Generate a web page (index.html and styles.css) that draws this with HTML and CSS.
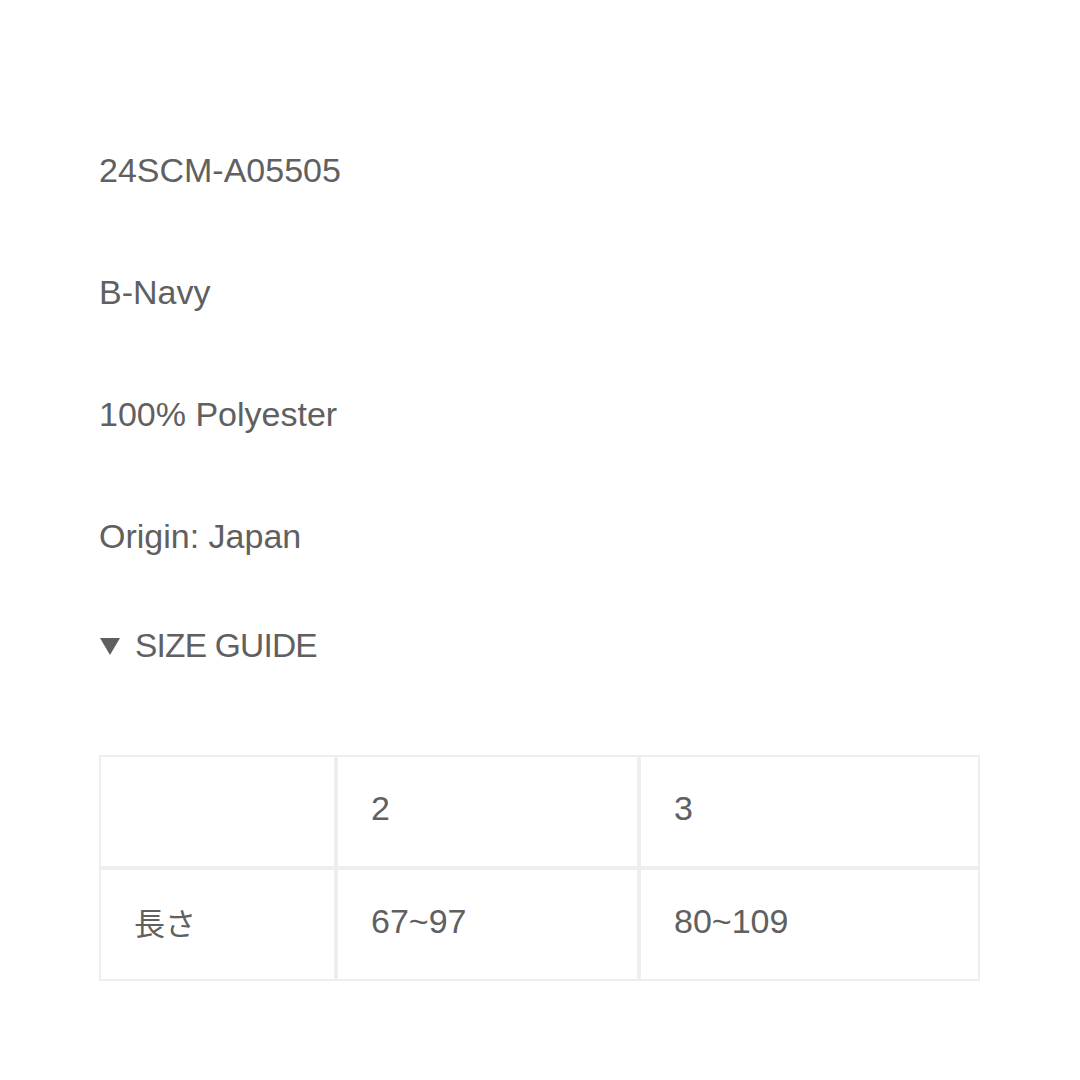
FILE: index.html
```html
<!DOCTYPE html>
<html lang="ja">
<head>
<meta charset="utf-8">
<link rel="stylesheet" href="styles.css">
</head>
<body>
<main class="page">
  <p class="line">24SCM-A05505</p>
  <p class="line">B-Navy</p>
  <p class="line">100% Polyester</p>
  <p class="line">Origin: Japan</p>
  <div class="guide">
    <svg class="tri" width="20" height="18" viewBox="0 0 20 18"><polygon points="0,1 20,1 10,18" fill="#5f5f5f"/></svg>
    <span>SIZE GUIDE</span>
  </div>
  <table class="sizes">
    <colgroup><col class="c1"><col class="c2"><col class="c3"></colgroup>
    <tr><td></td><td>2</td><td>3</td></tr>
    <tr><td class="jp">長さ</td><td>67~97</td><td>80~109</td></tr>
  </table>
</main>
</body>
</html>
```

FILE: styles.css
```css
html, body {
  margin: 0;
  padding: 0;
  background: #ffffff;
}
body {
  font-family: "Liberation Sans", Arial, "Noto Sans CJK JP", sans-serif;
  color: #606060;
}
.page {
  padding: 150px 0 0 99px;
  width: 881px;
}
.line {
  margin: 0 0 82px 0;
  font-size: 34px;
  line-height: 40px;
  height: 40px;
}
.line:nth-of-type(4) {
  margin-bottom: 70px;
}
.guide {
  display: flex;
  align-items: center;
  gap: 15px;
  height: 40px;
  font-size: 33.5px;
  line-height: 40px;
  letter-spacing: -0.8px;
  margin: 0 0 89px 1px;
}
.tri {
  display: block;
}
.sizes {
  border-collapse: separate;
  border-spacing: 0;
  width: 881px;
  table-layout: fixed;
  font-size: 34px;
}
.c1 { width: 237px; }
.c2 { width: 303px; }
.c3 { width: 341px; }
.sizes td {
  border: 2px solid #eeeeee;
  height: 113px;
  padding: 0 0 6px 33px;
  box-sizing: border-box;
  vertical-align: middle;
}
.jp {
  font-family: "Noto Sans CJK JP", sans-serif;
  font-size: 31px;
}
```
